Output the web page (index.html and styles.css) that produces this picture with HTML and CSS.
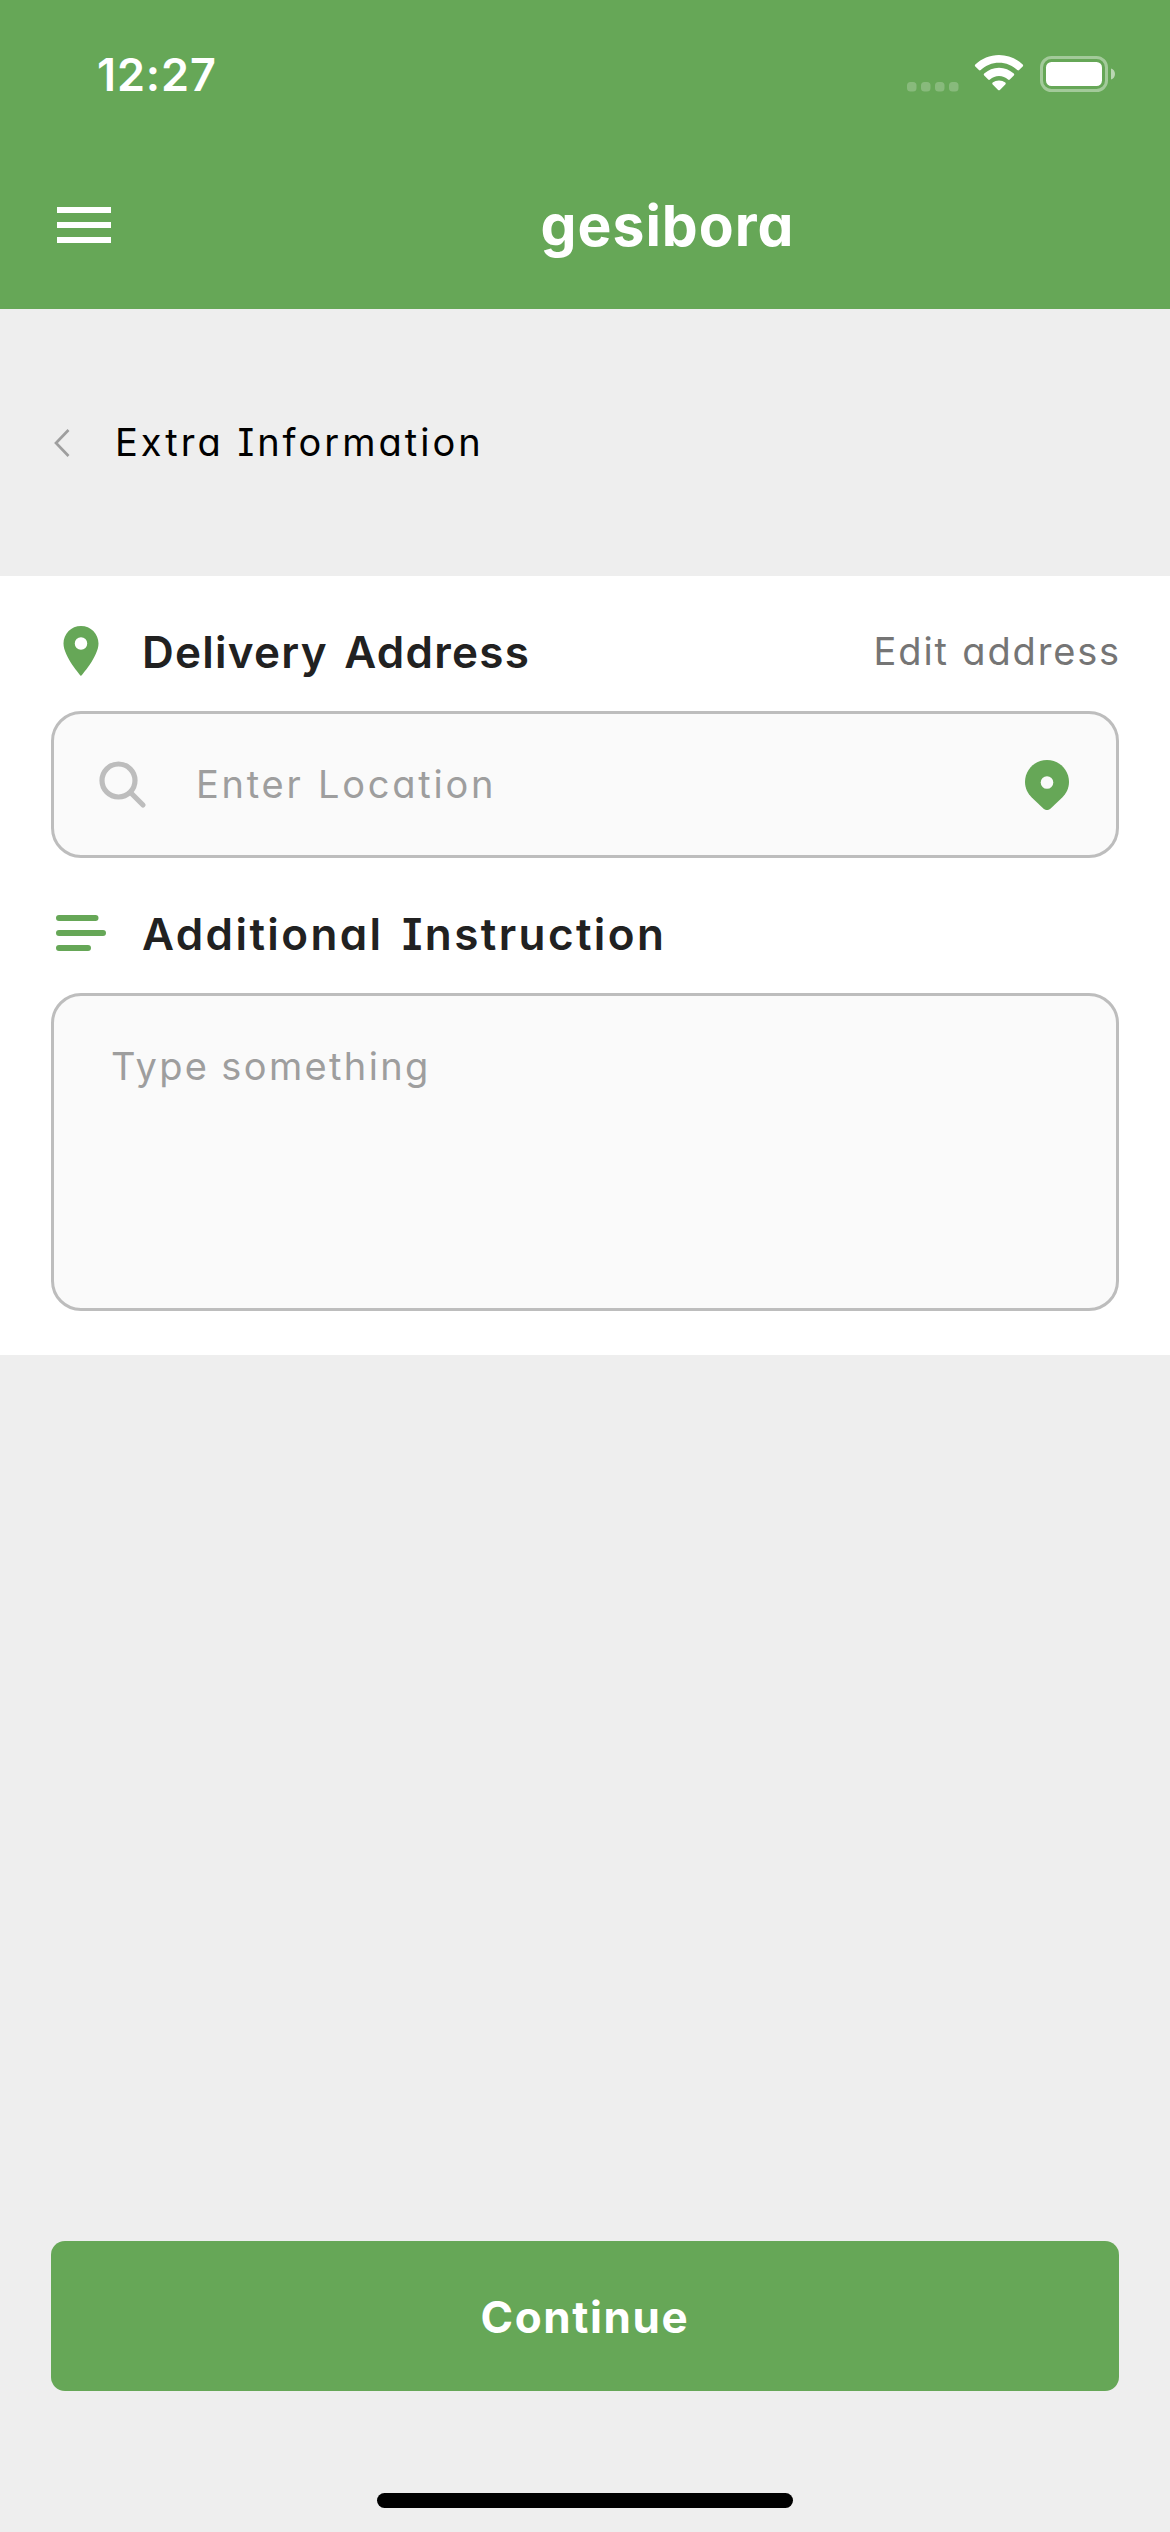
FILE: index.html
```html
<!DOCTYPE html>
<html lang="en">
<head>
<meta charset="utf-8">
<title>gesibora</title>
<link rel="stylesheet" href="styles.css">
</head>
<body>
<div class="screen">
  <header class="header">
    <div class="status">
      <span class="time">12:27</span>
      <svg class="status-icons" width="210" height="40" viewBox="0 0 210 40" fill="#fff">
        <g opacity=".22"><rect x="1" y="28" width="9.500" height="9.500" rx="3.500"/><rect x="15" y="28" width="9.500" height="9.500" rx="3.500"/><rect x="29" y="28" width="9.500" height="9.500" rx="3.500"/><rect x="43" y="28" width="9.500" height="9.500" rx="3.500"/></g>
        <path d="M93 1c-9 0-17.500 3.500-23.700 9.600-.6.600-.6 1.300 0 1.900l3.600 3.600c.5.500 1.200.5 1.800 0C79.500 11.300 86 8.700 93 8.700s13.500 2.600 18.300 7.400c.6.500 1.300.5 1.800 0l3.600-3.600c.6-.6.600-1.300 0-1.900C110.500 4.500 102 1 93 1zM93 13.700c-5.600 0-10.800 2.200-14.800 5.900-.6.600-.6 1.300 0 1.900l4 4c.5.500 1.200.5 1.800 0 2.500-2.200 5.600-3.500 9-3.500s6.500 1.300 9 3.500c.6.500 1.300.5 1.800 0l4-4c.6-.6.600-1.300 0-1.900-4-3.700-9.200-5.900-14.800-5.900zM93 26.400c-2.400 0-4.600.8-6.300 2.200-.6.500-.6 1.200 0 1.800l5.400 5.500c.5.600 1.300.6 1.800 0l5.400-5.500c.6-.6.600-1.300 0-1.800-1.700-1.400-3.900-2.200-6.300-2.200z"/>
        <rect x="135.500" y="3.500" width="65" height="33" rx="10" fill="none" stroke="#fff" stroke-width="3" opacity=".4"/>
        <rect x="140" y="8" width="56" height="24" rx="5.500"/>
        <path d="M205 14.500c2.500.8 4 3 4 5.500s-1.500 4.700-4 5.500z" opacity=".55"/>
      </svg>
    </div>
    <div class="appbar">
      <svg class="menu" width="54" height="36" viewBox="0 0 54 36" fill="#fff"><path d="M0 0h54v6H0zM0 15h54v6H0zM0 30h54v6H0z"/></svg>
      <h1 class="brand">gesibora</h1>
    </div>
  </header>
  <nav class="crumb">
    <svg width="16" height="28" viewBox="0 0 16 28" fill="none" stroke="#9e9e9e" stroke-width="2.700"><path d="M14.500 1 2 14l12.500 13"/></svg>
    <span class="crumb-title">Extra Information</span>
  </nav>
  <main class="card">
    <div class="row">
      <svg width="60" height="60" viewBox="0 0 24 24" fill="#66a757"><path d="M12 2C8.130 2 5 5.130 5 9c0 5.250 7 13 7 13s7-7.750 7-13c0-3.870-3.130-7-7-7zm0 9.500a2.500 2.500 0 1 1 0-5 2.500 2.500 0 0 1 0 5z"/></svg>
      <h2 class="heading delivery">Delivery Address</h2>
      <a class="edit">Edit address</a>
    </div>
    <div class="field">
      <svg width="48" height="48" viewBox="0 0 48 48" fill="none" stroke="#bdbdbd" stroke-width="5.200" stroke-linecap="round"><circle cx="19.500" cy="19.500" r="16.500"/><path d="M31.500 31.500 44 44"/></svg>
      <span class="hint location">Enter Location</span>
      <svg class="pin" width="44" height="50" viewBox="0 0 44 50"><path fill="#66a757" d="M22 0C9.800 0 0 9.800 0 22c0 6.500 3 11.600 6.500 15.300L18.600 48.800c2 1.700 4.800 1.700 6.800 0L37.500 37.300C41 33.600 44 28.500 44 22 44 9.800 34.200 0 22 0z"/><circle cx="22" cy="22.500" r="6.300" fill="#fafafa"/></svg>
    </div>
    <div class="row">
      <svg width="60" height="60" viewBox="0 0 60 60" fill="none" stroke="#66a757" stroke-width="6" stroke-linecap="round"><path d="M8 15h36.500M8 30h44M8 45h29"/></svg>
      <h2 class="heading instruction">Additional Instruction</h2>
    </div>
    <div class="field area"><span class="hint something">Type something</span></div>
  </main>
  <footer class="footer">
    <button class="continue">Continue</button>
    <div class="home"></div>
  </footer>
</div>
</body>
</html>
```
FILE: styles.css
```css
* { box-sizing: border-box; }
body { margin: 0; background: #eee; font-family: Inter, sans-serif; font-feature-settings: "cv11", "cv08", "calt" 0; }
h1, h2 { margin: 0; }
svg { display: block; flex: none; }
.screen { width: 1170px; height: 2532px; display: flex; flex-direction: column; background: #eee; }
.header { height: 309px; background: #66a757; color: #fff; }
.status { height: 148px; padding: 0 54px 0 97px; display: flex; justify-content: space-between; align-items: center; }
.time { padding-top: 2px; font-size: 45px; font-weight: 600; line-height: 54px; letter-spacing: 0.9px; }
.appbar { height: 154px; padding-left: 57px; display: flex; align-items: center; }
.brand { flex: 1; padding: 2px 0 0 54px; text-align: center; font-size: 57px; font-weight: 700; line-height: 70px; letter-spacing: 1px; }
.crumb { height: 267px; padding-left: 54px; display: flex; align-items: center; gap: 45px; }
.crumb-title { padding-bottom: 1px; font-size: 38px; letter-spacing: 3px; }
.card { height: 779px; padding: 0 51px; background: #fff; }
.row { height: 135px; padding-top: 15px; display: flex; align-items: center; }
.heading { margin-left: 31px; padding-top: 2px; font-size: 44px; font-weight: 600; color: #212121; }
.delivery { letter-spacing: 1.25px; word-spacing: 4px; }
.instruction { letter-spacing: 2.4px; word-spacing: 5px; }
.edit { margin-left: auto; margin-right: -2px; font-size: 38px; color: #757575; letter-spacing: 1.85px; word-spacing: 1px; }
.field { height: 147px; padding: 0 47px 0 45px; display: flex; align-items: center; border: 3px solid #bdbdbd; border-radius: 30px; background: #fafafa; }
.hint { font-size: 38px; color: #9e9e9e; }
.location { margin-left: 49px; padding-bottom: 1px; letter-spacing: 2.75px; word-spacing: 1px; }
.pin { margin-left: auto; }
.area { height: 318px; padding: 47px 57px; align-items: flex-start; }
.something { letter-spacing: 2.35px; word-spacing: -1px; }
.footer { margin-top: auto; height: 291px; padding: 0 51px; }
.continue { display: block; width: 100%; height: 150px; padding: 2px 0 0; border: 0; border-radius: 14px; background: #66a757; color: #fff; font: inherit; font-feature-settings: inherit; font-size: 44px; font-weight: 700; letter-spacing: 1.6px; }
.home { width: 416px; height: 15px; margin: 102px auto 0; border-radius: 8px; background: #000; }
```
